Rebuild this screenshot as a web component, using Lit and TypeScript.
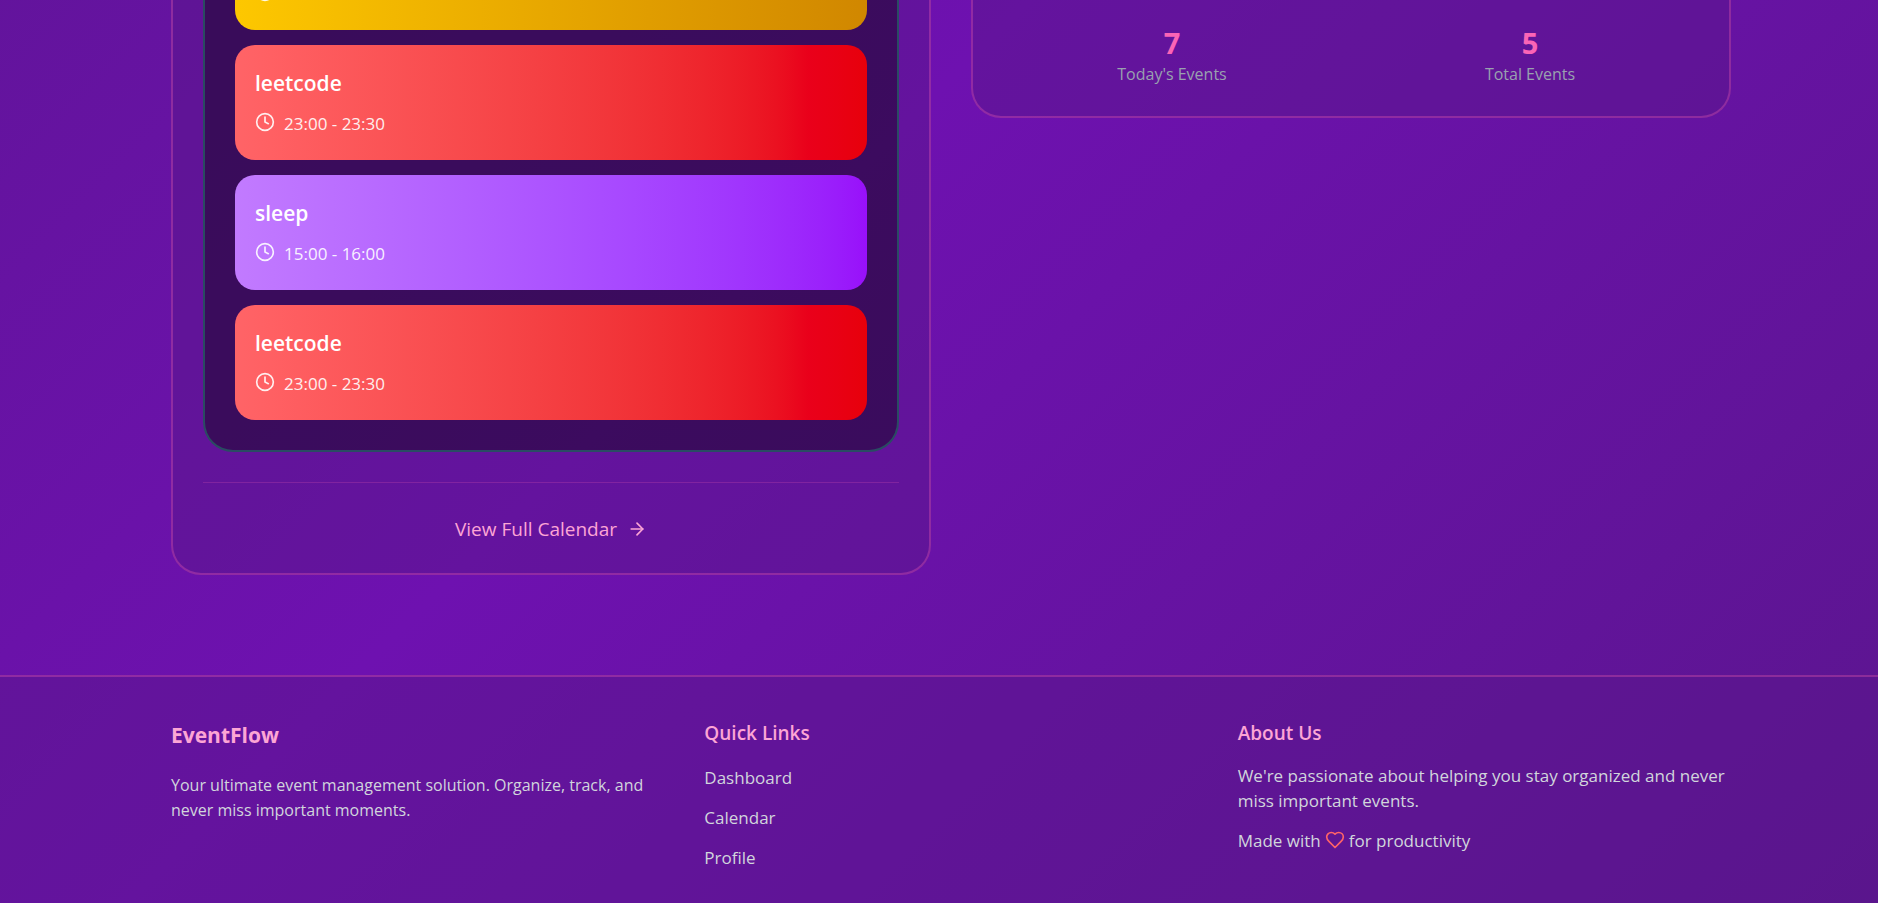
import { LitElement, html, css, svg } from "lit";
import { customElement } from "lit/decorators.js";
import { classMap } from "lit/directives/class-map.js";

interface EventItem {
  title: string;
  time: string;
  tone: "red" | "purple";
}

const events: EventItem[] = [
  { title: "leetcode", time: "23:00 - 23:30", tone: "red" },
  { title: "sleep", time: "15:00 - 16:00", tone: "purple" },
  { title: "leetcode", time: "23:00 - 23:30", tone: "red" },
];

const stats = [
  { value: 7, label: "Today's Events" },
  { value: 5, label: "Total Events" },
];

const links = ["Dashboard", "Calendar", "Profile"];

const icon = (shape: unknown, extra = "") => html`
  <svg class="icon ${extra}" viewBox="0 0 24 24" aria-hidden="true">${shape}</svg>
`;

const clock = svg`<circle cx="12" cy="12" r="10"></circle><path d="M12 6v6l4 2"></path>`;
const arrow = svg`<path d="M5 12h14"></path><path d="m12 5 7 7-7 7"></path>`;
const heart = svg`<path d="M19 14c1.49-1.46 3-3.21 3-5.5A5.5 5.5 0 0 0 16.5 3c-1.76 0-3 .5-4.5 2-1.5-1.5-2.74-2-4.5-2A5.5 5.5 0 0 0 2 8.5c0 2.3 1.5 4.05 3 5.5l7 7Z"></path>`;

@customElement("app-root")
export class AppRoot extends LitElement {
  static styles = css`
    :host {
      display: block;
      height: 100vh;
      overflow: hidden;
      font-family: "Open Sans", "Noto Sans", sans-serif;
      font-size: 17px;
      line-height: 25px;
      color: #d1d5dc;
      background: linear-gradient(135deg, #59168b -33%, #6e11b0 37%, #59168b 106%);
    }
    h2, h3, p, ul, dl, dd {
      margin: 0;
      padding: 0;
    }
    ul {
      list-style: none;
    }
    a {
      color: inherit;
      text-decoration: none;
    }
    .icon {
      flex: none;
      width: 20px;
      height: 20px;
      fill: none;
      stroke: currentColor;
      stroke-width: 2;
      stroke-linecap: round;
      stroke-linejoin: round;
    }
    .shell {
      padding-left: 24px;
    }
    .container {
      box-sizing: border-box;
      max-width: 1600px;
      margin: 0 auto;
      padding: 0 20px;
    }
    .columns {
      display: grid;
      grid-template-columns: 1fr 1fr;
      gap: 40px;
      align-items: start;
      padding-bottom: 100px;
    }
    .card {
      padding: 0 30px 29px;
      border: 2px solid rgba(251, 100, 182, 0.3);
      border-top: 0;
      border-radius: 0 0 30px 30px;
      background: rgba(89, 22, 139, 0.5);
    }
    .events {
      display: flex;
      flex-direction: column;
      gap: 15px;
      padding: 0 30px 30px;
      border: 2px solid rgba(5, 223, 114, 0.3);
      border-top: 0;
      border-radius: 0 0 30px 30px;
      background: rgba(0, 0, 0, 0.4);
    }
    .event {
      padding: 21px 20px 24px;
      border-radius: 20px;
      color: #fff;
    }
    .red {
      background: linear-gradient(to right in oklab, oklch(70.4% 0.191 22.216), oklch(57.7% 0.245 27.325));
    }
    .purple {
      background: linear-gradient(to right in oklab, oklch(71.4% 0.203 305.504), oklch(55.8% 0.288 302.321));
    }
    .yellow {
      background: linear-gradient(to right in oklab, oklch(85.2% 0.199 91.936), oklch(68.1% 0.162 75.834));
    }
    .tail {
      box-sizing: border-box;
      display: flex;
      flex-direction: column;
      justify-content: flex-end;
      height: 30px;
      padding-top: 0;
      overflow: hidden;
      border-radius: 0 0 20px 20px;
    }
    .name {
      font-size: 21px;
      font-weight: 600;
      line-height: 35px;
    }
    .time {
      display: flex;
      flex: none;
      align-items: center;
      gap: 9px;
      height: 25px;
      margin-top: 10px;
      opacity: 0.9;
    }
    .time .icon {
      margin-bottom: 4px;
    }
    .more {
      display: flex;
      justify-content: center;
      margin-top: 30px;
      padding-top: 31px;
      border-top: 1px solid rgba(251, 100, 182, 0.2);
      font-size: 19px;
      line-height: 30px;
      color: #fda5d5;
    }
    .more a {
      display: flex;
      align-items: center;
      gap: 10px;
    }
    .stats {
      display: grid;
      grid-template-columns: 1fr 1fr;
      gap: 20px;
      padding-top: 24px;
      text-align: center;
    }
    .stat {
      display: flex;
      flex-direction: column-reverse;
    }
    .value {
      font-size: 29px;
      font-weight: 700;
      line-height: 38px;
      color: #fb64b6;
    }
    .label {
      font-size: 16px;
      color: #99a1af;
    }
    .footer {
      min-height: 370px;
      padding-top: 41px;
      border-top: 2px solid rgba(251, 100, 182, 0.3);
      background: rgba(89, 22, 139, 0.5);
    }
    .footer-grid {
      display: grid;
      grid-template-columns: repeat(3, 1fr);
      gap: 40px;
    }
    .brand {
      margin-bottom: 20px;
      font-size: 21px;
      font-weight: 700;
      line-height: 35px;
      color: #fda5d5;
    }
    .tagline {
      font-size: 16px;
    }
    .heading {
      margin-bottom: 15px;
      font-size: 19px;
      font-weight: 600;
      line-height: 30px;
      color: #fda5d5;
    }
    .links {
      display: flex;
      flex-direction: column;
      gap: 10px;
      line-height: 30px;
    }
    .made {
      display: flex;
      align-items: center;
      gap: 4px;
      margin-top: 15px;
    }
    .heart {
      margin-bottom: 2px;
      color: #ff6467;
    }
  `;

  render() {
    return html`
      <main class="shell">
        <div class="container columns">
          <section class="card">
            <div class="events">
              <div class="event tail yellow"><div class="time">${icon(clock)}</div></div>
              ${events.map(
                (e) => html`
                  <article class=${classMap({ event: true, [e.tone]: true })}>
                    <h3 class="name">${e.title}</h3>
                    <div class="time">${icon(clock)}<span>${e.time}</span></div>
                  </article>
                `
              )}
            </div>
            <div class="more"><a href="#calendar">View Full Calendar ${icon(arrow)}</a></div>
          </section>
          <section class="card">
            <dl class="stats">
              ${stats.map(
                (s) => html`
                  <div class="stat">
                    <dt class="label">${s.label}</dt>
                    <dd class="value">${s.value}</dd>
                  </div>
                `
              )}
            </dl>
          </section>
        </div>
      </main>
      <footer class="footer shell">
        <div class="container footer-grid">
          <section>
            <h2 class="brand">EventFlow</h2>
            <p class="tagline">Your ultimate event management solution. Organize, track, and never miss important moments.</p>
          </section>
          <nav aria-label="Quick Links">
            <h3 class="heading">Quick Links</h3>
            <ul class="links">
              ${links.map((l) => html`<li><a href="#${l.toLowerCase()}">${l}</a></li>`)}
            </ul>
          </nav>
          <section>
            <h3 class="heading">About Us</h3>
            <p>We're passionate about helping you stay organized and never miss important events.</p>
            <p class="made"><span>Made with</span>${icon(heart, "heart")}<span>for productivity</span></p>
          </section>
        </div>
      </footer>
    `;
  }
}
